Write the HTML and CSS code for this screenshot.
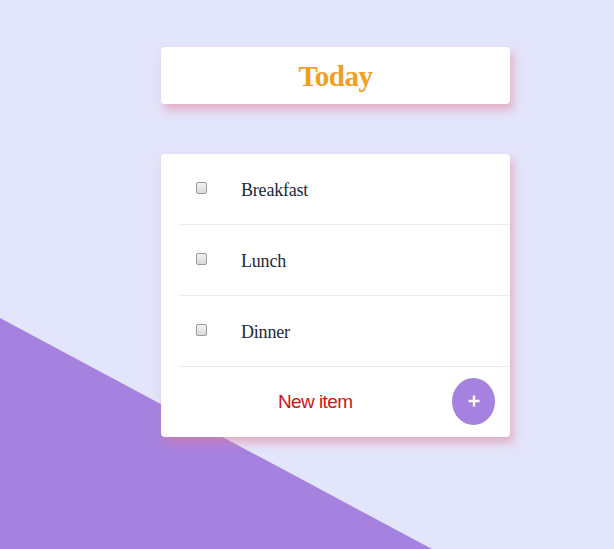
FILE: index.html
```html
<!DOCTYPE html>
<html>
<head>
<meta charset="utf-8">
<link rel="stylesheet" href="styles.css">
</head>
<body>
<div class="bg-shape"></div>
<main class="app">
  <header class="card title-card">
    <h1 class="title">Today</h1>
  </header>
  <section class="card list-card">
    <ul class="items">
      <li class="item"><span class="check"></span><span class="label">Breakfast</span></li>
      <li class="item"><span class="check"></span><span class="label">Lunch</span></li>
      <li class="item"><span class="check"></span><span class="label">Dinner</span></li>
    </ul>
    <div class="footer">
      <span class="new-item">New item</span>
      <button class="add-btn" type="button">
        <svg width="14" height="14" viewBox="0 0 14 14"><path d="M7 1.5v11M1.5 7h11" stroke="#fff" stroke-width="2.4"/></svg>
      </button>
    </div>
  </section>
</main>
</body>
</html>
```

FILE: styles.css
```css
html, body {
  margin: 0;
  padding: 0;
}
body {
  background: #e3e5fb;
  width: 614px;
  height: 549px;
  overflow: hidden;
  position: relative;
}
.bg-shape {
  position: absolute;
  inset: 0;
  background: #a682e0;
  clip-path: polygon(0 318px, 432px 549px, 0 549px);
}
.app {
  position: relative;
  padding: 47px 0 0 161px;
  display: flex;
  flex-direction: column;
  gap: 50px;
  width: 349px;
}
.card {
  background: #fff;
  border-radius: 4px;
  box-shadow: 3px 6px 10px rgba(232, 120, 145, 0.5);
}
.title-card {
  height: 57px;
  display: flex;
  align-items: center;
  justify-content: center;
}
.title {
  margin: 0;
  font-family: "Liberation Serif", serif;
  font-weight: bold;
  font-size: 29px;
  letter-spacing: -0.5px;
  color: #f0a01e;
  position: relative;
  top: 1px;
}
.items {
  list-style: none;
  margin: 0;
  padding: 0;
}
.item {
  height: 70px;
  margin-left: 17px;
  border-bottom: 1px solid #ececec;
  display: flex;
  align-items: center;
  font-family: "Liberation Serif", serif;
  font-size: 18px;
  letter-spacing: -0.2px;
  color: #1c2838;
}
.check {
  box-sizing: border-box;
  width: 11px;
  height: 12px;
  margin-left: 18px;
  border: 1px solid #9a9a9a;
  border-radius: 2px;
  background: linear-gradient(#f2f2f2, #d9d9d9);
  position: relative;
  top: -1px;
}
.label {
  margin-left: 34px;
  position: relative;
  top: 1px;
}
.footer {
  height: 70px;
  display: flex;
  align-items: center;
  position: relative;
}
.new-item {
  font-family: "Liberation Sans", sans-serif;
  font-size: 19px;
  letter-spacing: -0.6px;
  color: #d01414;
  margin-left: 117px;
}
.add-btn {
  margin-left: auto;
  margin-right: 15px;
  width: 43px;
  height: 47px;
  border: none;
  border-radius: 50%;
  background: #a682e0;
  display: flex;
  align-items: center;
  justify-content: center;
  padding: 0;
  position: relative;
  top: -1px;
}
```
